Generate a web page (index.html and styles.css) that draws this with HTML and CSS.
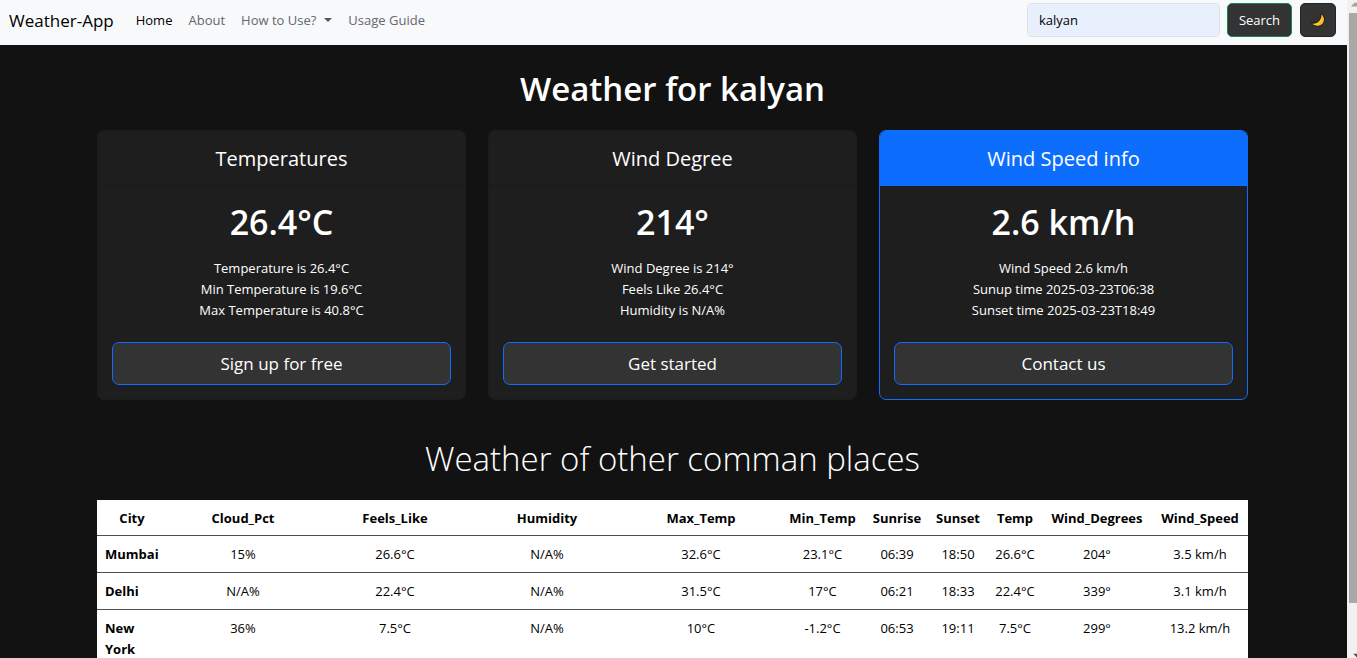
FILE: index.html
```html
<!DOCTYPE html>
<html lang="en">
<head>
<meta charset="utf-8">
<meta name="viewport" content="width=device-width, initial-scale=1">
<title>Weather-App</title>
<link rel="stylesheet" href="styles.css">
</head>
<body>
<div class="shell">
  <div class="page">
    <header class="navbar">
      <a class="brand" href="#">Weather-App</a>
      <nav class="nav-links" aria-label="Main">
        <a class="nav-link active" href="#">Home</a>
        <a class="nav-link" href="#">About</a>
        <a class="nav-link dropdown" href="#">How to Use?</a>
        <a class="nav-link" href="#">Usage Guide</a>
      </nav>
      <form class="search">
        <input class="search-input" type="search" aria-label="Search city" value="kalyan">
        <button class="btn btn-search" type="submit">Search</button>
        <button class="btn btn-theme" type="button" aria-label="Toggle dark mode">
          <svg class="moon" viewBox="0 0 14 14" aria-hidden="true"><path d="M9.800.6C14.300 3 14.500 9 11 11.700 7.700 14.200 2.500 13.700.6 10 4 10.500 6.600 9.600 8.200 7.400 9.800 5.300 10.200 3 9.800.6Z" fill="#fdc52f" stroke="#17120a" stroke-width="1"/><path d="M11.900 4.500c.6 3-.6 5.600-3 6.900" fill="none" stroke="#f5a524" stroke-width="1"/></svg>
        </button>
      </form>
    </header>

    <main class="container">
      <h1 class="title">Weather for kalyan</h1>
      <div class="cards">
        <section class="card">
          <h2 class="card-header">Temperatures</h2>
          <div class="card-body">
            <p class="card-value">26.4°C</p>
            <ul class="card-list">
              <li>Temperature is 26.4°C</li>
              <li>Min Temperature is 19.6°C</li>
              <li>Max Temperature is 40.8°C</li>
            </ul>
            <button class="btn btn-card" type="button">Sign up for free</button>
          </div>
        </section>
        <section class="card">
          <h2 class="card-header">Wind Degree</h2>
          <div class="card-body">
            <p class="card-value">214°</p>
            <ul class="card-list">
              <li>Wind Degree is 214°</li>
              <li>Feels Like 26.4°C</li>
              <li>Humidity is N/A%</li>
            </ul>
            <button class="btn btn-card" type="button">Get started</button>
          </div>
        </section>
        <section class="card card-primary">
          <h2 class="card-header">Wind Speed info</h2>
          <div class="card-body">
            <p class="card-value">2.6 km/h</p>
            <ul class="card-list">
              <li>Wind Speed 2.6 km/h</li>
              <li>Sunup time 2025-03-23T06:38</li>
              <li>Sunset time 2025-03-23T18:49</li>
            </ul>
            <button class="btn btn-card" type="button">Contact us</button>
          </div>
        </section>
      </div>

      <h2 class="subtitle">Weather of other comman places</h2>
      <table class="places">
        <colgroup>
          <col class="c-city"><col class="c-wide"><col class="c-wide"><col class="c-wide"><col class="c-max"><col class="c-min"><col class="c-sunrise"><col class="c-sunset"><col class="c-temp"><col class="c-degrees"><col class="c-speed">
        </colgroup>
        <thead>
          <tr><th scope="col">City</th><th scope="col">Cloud_Pct</th><th scope="col">Feels_Like</th><th scope="col">Humidity</th><th scope="col">Max_Temp</th><th scope="col">Min_Temp</th><th scope="col">Sunrise</th><th scope="col">Sunset</th><th scope="col">Temp</th><th scope="col">Wind_Degrees</th><th scope="col">Wind_Speed</th></tr>
        </thead>
        <tbody>
          <tr><th scope="row">Mumbai</th><td>15%</td><td>26.6°C</td><td>N/A%</td><td>32.6°C</td><td>23.1°C</td><td>06:39</td><td>18:50</td><td>26.6°C</td><td>204°</td><td>3.5 km/h</td></tr>
          <tr><th scope="row">Delhi</th><td>N/A%</td><td>22.4°C</td><td>N/A%</td><td>31.5°C</td><td>17°C</td><td>06:21</td><td>18:33</td><td>22.4°C</td><td>339°</td><td>3.1 km/h</td></tr>
          <tr><th scope="row">New York</th><td>36%</td><td>7.5°C</td><td>N/A%</td><td>10°C</td><td>-1.2°C</td><td>06:53</td><td>19:11</td><td>7.5°C</td><td>299°</td><td>13.2 km/h</td></tr>
        </tbody>
      </table>
    </main>
  </div>
  <div class="scrollbar" aria-hidden="true">
    <svg class="arrow" viewBox="0 0 8 5"><path d="M0 5 4.500 0H8V5Z" fill="#a3a3a3"/></svg>
    <div class="thumb"></div>
    <svg class="arrow" viewBox="0 0 8 5"><path d="M3 0H8V5Z" fill="#505050"/></svg>
  </div>
</div>
</body>
</html>
```
FILE: styles.css
```css
* { box-sizing: border-box; }

body {
  margin: 0;
  background: #121212;
  color: #fff;
  font-family: "Open Sans", "Noto Sans", sans-serif;
  font-size: 13px;
  line-height: 21px;
}

h1, h2, p, ul { margin: 0; padding: 0; }
a { text-decoration: none; }

.shell { display: flex; height: 100vh; overflow: hidden; }
.page { flex: 1; min-width: 0; }

.navbar {
  display: flex;
  align-items: center;
  padding: 3px 11px 8px 9px;
  background: #f8f9fa;
}
.brand { margin-right: 14px; color: #000; font-size: 17px; }
.nav-links { display: flex; flex: 1; }
.nav-link { padding: 0 8px; color: #65676a; }
.nav-link.active { color: #000; }
.dropdown { display: flex; align-items: center; gap: 8px; }
.dropdown::after {
  content: "";
  border: 4px solid transparent;
  border-top-color: #55575a;
  border-bottom: 0;
}

.search { display: flex; }
.search-input {
  width: 193px;
  height: 34px;
  margin-right: 7px;
  padding: 0 11px;
  border: 1px solid #dee2e6;
  border-radius: 5px;
  background: #e8f0fe;
  color: #000;
  font: inherit;
}

.btn {
  border: 1px solid;
  border-radius: 5px;
  background: #333;
  color: #fff;
  font: inherit;
}
.btn-search { width: 65px; margin-right: 8px; border-color: #198754; }
.btn-theme {
  display: grid;
  place-items: center;
  width: 36px;
  padding: 0;
  border-color: #212529;
}
.moon { width: 14px; height: 14px; }

.container { max-width: 1153px; margin: 0 auto; padding: 22px 2px 0 0; }
.title { text-align: center; font-size: 33px; font-weight: 600; line-height: 43px; }

.cards {
  display: grid;
  grid-template-columns: repeat(3, 1fr);
  gap: 22px;
  margin-top: 20px;
  text-align: center;
}
.card {
  overflow: hidden;
  border: 1px solid #1b1b1b;
  border-radius: 7px;
  background: #1e1e1e;
}
.card-header {
  padding: 14px 14px 13px;
  border-bottom: 1px solid #1a1a1a;
  font-size: 20px;
  font-weight: 400;
  line-height: 27px;
}
.card-primary { border-color: #0d6efd; }
.card-primary .card-header { border-color: #0d6efd; background: #0d6efd; }
.card-body { padding: 15px 14px 14px; }
.card-value { font-size: 34px; font-weight: 600; line-height: 43px; }
.card-list { margin: 14px 0 21px; list-style: none; }
.btn-card {
  display: block;
  width: 100%;
  height: 43px;
  border-color: #0d6efd;
  border-radius: 7px;
  font-size: 17px;
}

.subtitle {
  margin: 37px 0 20px;
  text-align: center;
  font-size: 33px;
  font-weight: 300;
  line-height: 43px;
}

.places {
  width: 100%;
  table-layout: fixed;
  border-collapse: collapse;
  background: #fff;
  color: #000;
  text-align: center;
}
.places th, .places td {
  padding: 8px 0 7px;
  border-bottom: 1px solid #4d5154;
  vertical-align: top;
}
.places th { font-weight: 700; }
.places thead th { padding-bottom: 6px; }
.places tbody th { padding-left: 8px; padding-right: 8px; text-align: left; }
.c-city { width: 70px; }
.c-wide { width: 152px; }
.c-max { width: 156px; }
.c-min { width: 87px; }
.c-sunrise { width: 62px; }
.c-sunset { width: 60px; }
.c-temp { width: 54px; }
.c-degrees { width: 110px; }
.c-speed { width: 96px; }

.scrollbar {
  display: flex;
  flex-direction: column;
  align-items: flex-end;
  width: 10px;
  padding-top: 2px;
  background: #f1f1f1;
}
.arrow { width: 6px; height: 5px; }
.thumb { width: 8px; height: 90%; margin: 6px 0 auto; background: #a8a8a8; }
```
